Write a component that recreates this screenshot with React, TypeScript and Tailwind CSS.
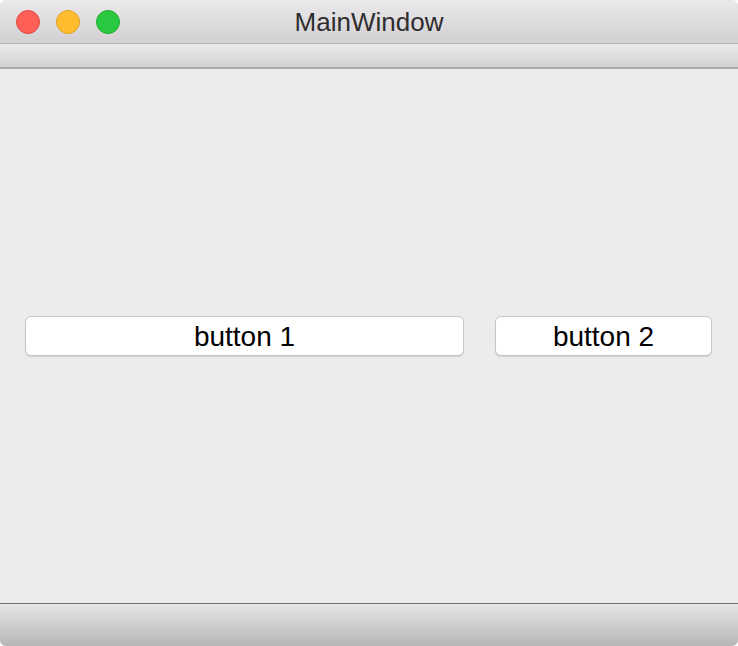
export default function App() {
  return (
    <div className="h-[646px] w-[738px] bg-white">
      <div
        className="flex h-full w-full flex-col overflow-hidden rounded-[6px] bg-[#ececec]"
        style={{ fontFamily: '"Liberation Sans", Arial, sans-serif' }}
      >
        {/* title bar */}
        <div className="relative flex h-[44px] shrink-0 items-center justify-center border-b border-[#b4b3b4] bg-gradient-to-b from-[#ebe9eb] to-[#d2d0d2]">
          <div className="absolute left-[16px] top-[10px] flex gap-[16px]">
            <span className="h-[24px] w-[24px] rounded-full border border-[#e2463f] bg-[#fe5f57]" />
            <span className="h-[24px] w-[24px] rounded-full border border-[#dfa123] bg-[#febc2e]" />
            <span className="h-[24px] w-[24px] rounded-full border border-[#1dad2b] bg-[#28c840]" />
          </div>
          <span className="pt-[1px] text-[26px] leading-none text-[#2f2d2f]">MainWindow</span>
        </div>

        {/* toolbar strip */}
        <div className="h-[25px] shrink-0 border-b-2 border-[#aaaaaa] bg-gradient-to-b from-[#ebebeb] to-[#d2d2d2]" />

        {/* central widget */}
        <div className="flex flex-1 items-center gap-[31px] pl-[25px] pr-[26px]">
          <button className="h-[40px] flex-[2] rounded-[6px] border border-[#c6c6c6] bg-white pt-[2px] text-[28px] leading-none text-black shadow-[0_1px_1px_rgba(0,0,0,0.12)]">
            button 1
          </button>
          <button className="h-[40px] w-[217px] shrink-0 rounded-[6px] border border-[#c6c6c6] bg-white pt-[2px] text-[28px] leading-none text-black shadow-[0_1px_1px_rgba(0,0,0,0.12)]">
            button 2
          </button>
        </div>

        {/* status bar */}
        <div className="h-[43px] shrink-0 border-t border-[#6e6e6e] bg-gradient-to-b from-[#e6e6e6] to-[#b6b6b6]" />
      </div>
    </div>
  );
}
